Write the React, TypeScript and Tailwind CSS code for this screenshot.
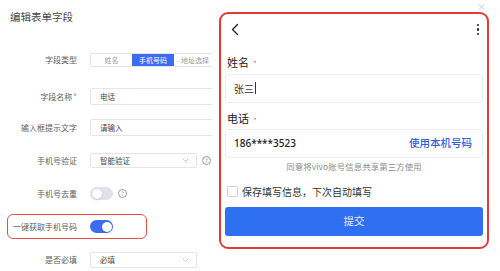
import React from 'react';

const cjk = "font-['Noto_Sans_CJK_SC','Noto_Sans',sans-serif]";

function Help() {
  return (
    <span className="flex items-center justify-center w-[9px] h-[9px] rounded-full border border-[#9a9a9a] text-[6px] leading-none text-[#8a8a8a]">
      ?
    </span>
  );
}

function Chevron() {
  return (
    <svg width="7" height="5" viewBox="0 0 7 5" fill="none">
      <polyline points="1,1 3.5,3.5 6,1" stroke="#b5b5b5" strokeWidth="0.8" />
    </svg>
  );
}

function Toggle({ on }: { on: boolean }) {
  return (
    <div
      className={`w-[23px] h-[13px] rounded-full flex items-center px-[1.5px] ${
        on ? 'bg-[#3b6cf2] justify-end' : 'bg-[#dfe2e8] justify-start'
      }`}
    >
      <div className="w-[10px] h-[10px] rounded-full bg-white shadow-sm" />
    </div>
  );
}

function Label({ children, w = 'w-[77px]' }: { children: React.ReactNode; w?: string }) {
  return <div className={`${w} text-right text-[8px] leading-none text-[#5e5e5e] shrink-0`}>{children}</div>;
}

function LeftPanel() {
  return (
    <div className="w-[212px] shrink-0 overflow-hidden">
      <div className="h-[34px] flex items-center pl-[10px] text-[10.5px] text-[#4a4a4a]">编辑表单字段</div>

      {/* 字段类型 */}
      <div className="mt-[19px] h-[14px] flex items-center">
        <Label>字段类型</Label>
        <div className="ml-[13px] flex h-[14px] border border-[#e3e3e3] rounded-[2px] text-[7px] text-[#9a9a9a] w-[150px] shrink-0">
          <div className="w-[41px] flex items-center justify-center">姓名</div>
          <div className="w-[42px] flex items-center justify-center bg-[#3b6cf2] text-white">手机号码</div>
          <div className="w-[42px] flex items-center justify-center">地址选择</div>
        </div>
      </div>

      {/* 字段名称 */}
      <div className="mt-[21px] h-[17px] flex items-center">
        <Label>
          字段名称<span className="text-[#e55] ml-[1px]">*</span>
        </Label>
        <div className="ml-[13px] h-[17px] w-[140px] shrink-0 border border-[#e5e5e5] rounded-[2px] flex items-center pl-[9px] text-[7.5px] text-[#444]">
          电话
        </div>
      </div>

      {/* 输入框提示文字 */}
      <div className="mt-[14px] h-[17px] flex items-center">
        <Label>输入框提示文字</Label>
        <div className="ml-[13px] h-[17px] w-[140px] shrink-0 border border-[#e5e5e5] rounded-[2px] flex items-center pl-[9px] text-[7.5px] text-[#444]">
          请输入
        </div>
      </div>

      {/* 手机号验证 */}
      <div className="mt-[17px] h-[15px] flex items-center">
        <Label>手机号验证</Label>
        <div className="ml-[13px] h-[15px] w-[107px] shrink-0 border border-[#e5e5e5] rounded-[2px] flex items-center justify-between pl-[9px] pr-[7px] text-[7.5px] text-[#444]">
          <span>智能验证</span>
          <Chevron />
        </div>
        <div className="ml-[5px]">
          <Help />
        </div>
      </div>

      {/* 手机号去重 */}
      <div className="mt-[18px] h-[15px] flex items-center">
        <Label>手机号去重</Label>
        <div className="ml-[13px]">
          <Toggle on={false} />
        </div>
        <div className="ml-[5px]">
          <Help />
        </div>
      </div>

      {/* 一键获取手机号码 */}
      <div className="mt-[13px] ml-[7px] w-[140px] h-[25px] border border-[#e2504c] rounded-[6px] flex items-center">
        <Label w="w-[69px]">一键获取手机号码</Label>
        <div className="ml-[13px]">
          <Toggle on={true} />
        </div>
      </div>

      {/* 是否必填 */}
      <div className="mt-[13px] h-[16px] flex items-center">
        <Label>是否必填</Label>
        <div className="ml-[13px] h-[16px] w-[107px] shrink-0 border border-[#e5e5e5] rounded-[2px] flex items-center justify-between pl-[9px] pr-[7px] text-[7.5px] text-[#444]">
          <span>必填</span>
          <Chevron />
        </div>
      </div>
    </div>
  );
}

function PhonePreview() {
  return (
    <div className="flex-1 flex flex-col">
      <div className="h-[12px] flex items-center justify-end pr-[14px] text-[9px] leading-none text-[#c4c4c4]">×</div>
      <div className="w-[270px] h-[237px] border-2 border-[#e53a34] rounded-[9px] bg-white px-[4px] flex flex-col">
        {/* header */}
        <div className="h-[31px] flex items-center justify-between pl-[5px] pr-[4px]">
          <svg width="10" height="13" viewBox="0 0 10 13" fill="none">
            <polyline points="7.5,1.5 2.5,6.5 7.5,11.5" stroke="#222" strokeWidth="1.4" strokeLinejoin="round" strokeLinecap="round" />
          </svg>
          <div className="flex flex-col gap-[2px]">
            <div className="w-[2.5px] h-[2.5px] rounded-full bg-[#222]" />
            <div className="w-[2.5px] h-[2.5px] rounded-full bg-[#222]" />
            <div className="w-[2.5px] h-[2.5px] rounded-full bg-[#222]" />
          </div>
        </div>

        <div className="mt-[8px] h-[18px] flex items-center pl-[2px] text-[11px] text-[#222]">
          姓名<span className="text-[#e55] text-[8px] ml-[2px]">•</span>
        </div>
        <div className="mt-[2.5px] h-[29px] border border-[#ececec] rounded-[3px] flex items-center pl-[8px] text-[10px] text-[#333]">
          张三<span className="ml-[1px] w-[1px] h-[12px] bg-[#333]" />
        </div>

        <div className="mt-[7px] h-[18px] flex items-center pl-[2px] text-[11px] text-[#222]">
          电话<span className="text-[#e55] text-[8px] ml-[2px]">•</span>
        </div>
        <div className="mt-[1px] h-[29px] border border-[#ececec] rounded-[3px] flex items-center justify-between pl-[8px] pr-[10px]">
          <span className="text-[10px] font-medium text-[#222] font-['Noto_Sans',sans-serif]">186****3523</span>
          <span className="text-[10.5px] font-medium text-[#2d5fd8]">使用本机号码</span>
        </div>

        <div className="mt-[2px] h-[14px] flex items-center justify-center text-[8.5px] text-[#8c8c8c]">
          同意将vivo账号信息共享第三方使用
        </div>

        <div className="mt-[10px] h-[16px] flex items-center pl-[2px]">
          <div className="w-[11px] h-[11px] border border-[#cfcfcf] rounded-[2px] bg-white" />
          <span className="ml-[4px] text-[10px] text-[#333]">保存填写信息，下次自动填写</span>
        </div>

        <div className="mt-[7px] h-[29px] rounded-[3px] bg-[#2f6ff2] flex items-center justify-center text-[10.5px] text-[#e6ecff]">
          提交
        </div>
      </div>
    </div>
  );
}

export default function App() {
  return (
    <div className={`w-[500px] h-[271px] bg-white overflow-hidden flex ${cjk}`}>
      <LeftPanel />
      <div className="w-[7px] shrink-0" />
      <PhonePreview />
    </div>
  );
}
